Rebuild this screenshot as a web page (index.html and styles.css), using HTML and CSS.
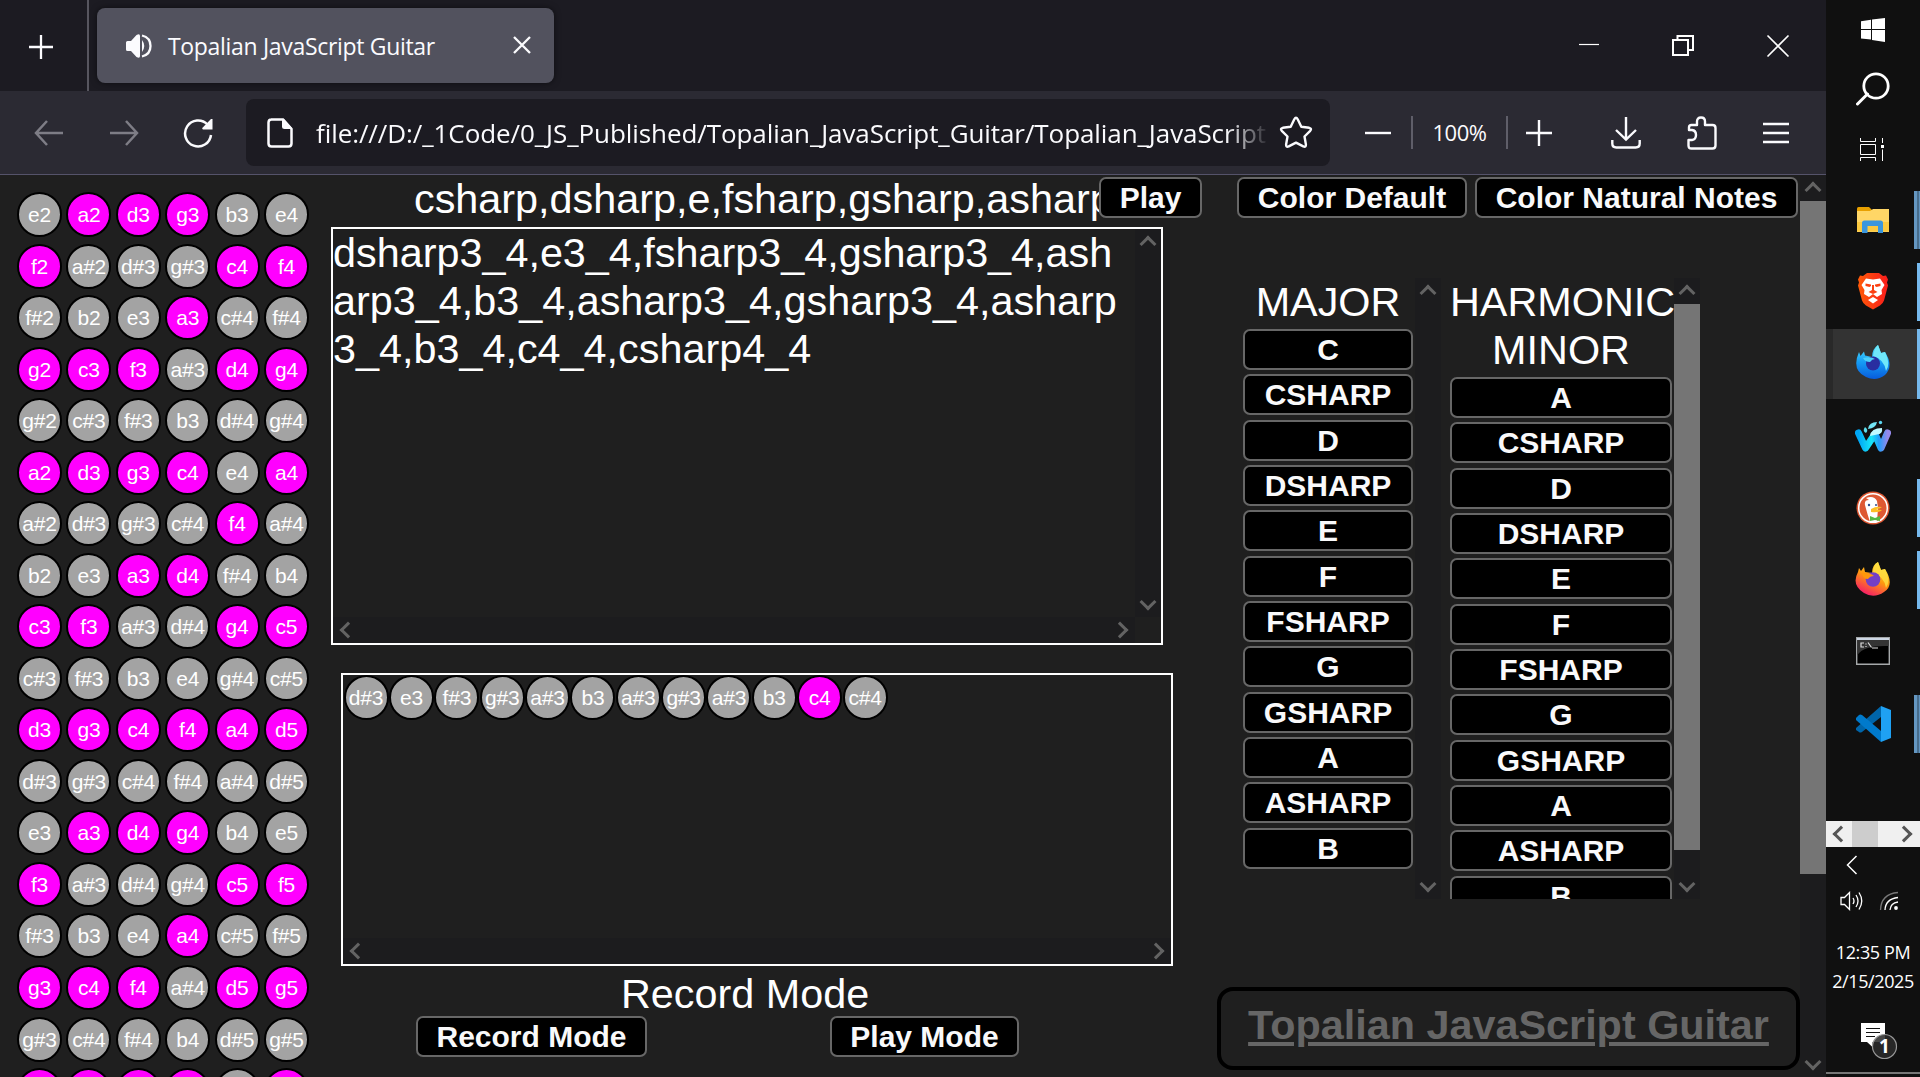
FILE: index.html
```html
<!DOCTYPE html>
<html lang="en">
<head>
<meta charset="utf-8">
<title>Topalian JavaScript Guitar</title>
<link rel="stylesheet" href="styles.css">
</head>
<body>
<div class="desktop">
  <div class="window">
    <header class="tabbar">
      <button class="newtab"><svg width="26" height="26" viewBox="0 0 26 26"><path d="M13 1v24M1 13h24" stroke="#fbfbfe" stroke-width="2.3"/></svg></button>
      <div class="tab">
        <svg width="26" height="24" viewBox="0 0 26 24"><path d="M0 8.500Q0 7 1.500 7H5L10.500 1Q14 -1 14 2V22Q14 25 10.500 23L5 17H1.500Q0 17 0 15.500Z" fill="#fbfbfe"/><path d="M16 6q4.500 6 0 12z" fill="#fbfbfe"/><path d="M16 1.500q8.500 2 8.500 10.500T16 22.500" fill="none" stroke="#fbfbfe" stroke-width="2.300"/></svg>
        <span class="tab-title">Topalian JavaScript Guitar</span>
        <svg class="tab-close" width="18" height="18" viewBox="0 0 18 18"><path d="M1 1l16 16M17 1L1 17" stroke="#fbfbfe" stroke-width="2.300"/></svg>
      </div>
      <div class="controls">
        <svg width="22" height="24" viewBox="0 0 22 24"><path d="M1 10.500h20" stroke="#fff" stroke-width="1.200"/></svg>
        <svg width="22" height="24" viewBox="0 0 22 24"><path d="M1 6h15v15H1zM5.500 6V2H21v14h-4.500" fill="none" stroke="#fff" stroke-width="2"/></svg>
        <svg width="24" height="24" viewBox="0 0 24 24"><path d="M1.500 1.500l21 21M22.500 1.500l-21 21" stroke="#fff" stroke-width="1.600"/></svg>
      </div>
    </header>
    <nav class="toolbar">
      <svg class="ic back" width="30" height="28" viewBox="0 0 30 28"><path d="M13 2L2 14l11 12M2 14h27" fill="none" stroke="#7e7d86" stroke-width="2.500"/></svg>
      <svg class="ic fwd" width="30" height="28" viewBox="0 0 30 28"><path d="M17 2l11 12-11 12M28 14H1" fill="none" stroke="#7e7d86" stroke-width="2.500"/></svg>
      <svg class="ic reload" width="30" height="30" viewBox="0 0 30 30"><path d="M24.500 6.500A13 13 0 1 0 28 17" fill="none" stroke="#fbfbfe" stroke-width="2.500"/><path d="M29.500 1v10.500H20q-1.500-.5-.5-1.800L28 1z" fill="#fbfbfe"/></svg>
      <div class="urlbar">
        <svg width="26" height="30" viewBox="0 0 26 30"><path d="M4 1.500h12L24.500 11v14.500q0 3-3 3h-17q-3 0-3-3v-21q0-3 3-3z" fill="none" stroke="#fbfbfe" stroke-width="2.500"/><path d="M15 1h2l8 9v1h-7.500q-2.500 0-2.500-2.500z" fill="#fbfbfe"/></svg>
        <span class="url">file:///D:/_1Code/0_JS_Published/Topalian_JavaScript_Guitar/Topalian_JavaScript</span>
        <svg class="star" width="34" height="33" viewBox="0 0 34 33"><path d="M15.300 3.300q1.700-3 3.400 0l3.600 7.400 7.900 1.100q3 .7 1 3l-5.700 5.700 1.400 8q.2 3-2.600 1.900L17 26.600l-7.300 3.800q-2.800 1.100-2.600-1.900l1.400-8-5.700-5.700q-2-2.300 1-3l7.900-1.100z" fill="none" stroke="#fbfbfe" stroke-width="2.400" stroke-linejoin="round"/></svg>
      </div>
      <svg class="ic zoomout" width="26" height="26" viewBox="0 0 26 26"><path d="M0 13h26" stroke="#fbfbfe" stroke-width="2.400"/></svg>
      <span class="zoom">100%</span>
      <svg class="ic zoomin" width="26" height="26" viewBox="0 0 26 26"><path d="M13 0v26M0 13h26" stroke="#fbfbfe" stroke-width="2.400"/></svg>
      <svg class="ic download" width="30" height="32" viewBox="0 0 30 32"><path d="M15 0v22M5 13l10 9.500L25 13M1.300 23v3.500q0 4 4 4h19.400q4 0 4-4V23" fill="none" stroke="#fbfbfe" stroke-width="2.400"/></svg>
      <svg class="ic puzzle" width="30" height="34" viewBox="0 0 30 34"><path d="M2 14V11.500Q2 9 4.500 9H10V5.500Q10 1.500 14 1.500T18 5.500V9h7.500Q28.500 9 28.500 12v17.500q0 3-3 3H4.500q-3 0-3-3V24H5q4-.5 4-5t-4-5z" fill="none" stroke="#fbfbfe" stroke-width="2.400" stroke-linejoin="round"/></svg>
      <svg class="ic" width="26" height="22" viewBox="0 0 26 22"><path d="M0 2h26M0 11h26M0 20h26" stroke="#fbfbfe" stroke-width="2.400"/></svg>
    </nav>
    <main class="page">
      <section class="fretboard" id="fretboard"></section>
      <section class="center">
        <div class="song-row">
          <span class="song">csharp,dsharp,e,fsharp,gsharp,asharp,</span>
          <button class="btn play">Play</button>
        </div>
        <div class="editor">
          <div class="editor-text">dsharp3_4,e3_4,fsharp3_4,gsharp3_4,ash<br>arp3_4,b3_4,asharp3_4,gsharp3_4,asharp<br>3_4,b3_4,c4_4,csharp4_4</div>
          <div class="vbar"><i class="arrow up"></i><i class="arrow down"></i></div>
          <div class="hbar"><i class="arrow left"></i><i class="arrow right"></i></div>
        </div>
        <div class="recording">
          <div class="recorded" id="recorded"></div>
          <div class="hbar"><i class="arrow left"></i><i class="arrow right"></i></div>
        </div>
        <div class="mode">Record Mode</div>
        <div class="mode-row"><button class="btn">Record Mode</button><button class="btn playmode">Play Mode</button></div>
      </section>
      <section class="side">
        <div class="color-row"><button class="btn cdef">Color Default</button><button class="btn cnat">Color Natural Notes</button></div>
        <div class="scales">
          <div class="scale major"><div class="list" id="major"><h2>MAJOR</h2></div><div class="vbar"><i class="arrow up"></i><i class="arrow down"></i></div></div>
          <div class="scale minor"><div class="list" id="minor"><h2>HARMONIC<br>MINOR</h2></div><div class="vbar"><i class="arrow up"></i><b class="thumb"></b><i class="arrow down"></i></div></div>
        </div>
        <div class="brand"><a>Topalian JavaScript Guitar</a></div>
      </section>
      <div class="vbar pagebar"><i class="arrow up"></i><b class="thumb"></b><i class="arrow down"></i></div>
    </main>
  </div>
  <aside class="taskbar">
    <div class="task t-start"><svg width="24" height="24" viewBox="0 0 24 24"><path d="M0 3.200L10 1.800V11H0zM11 1.600L24 0v11H11zM0 12h10v9.500L0 20.500zM11 12h13v12l-13-1.900z" fill="#fff"/></svg></div>
    <div class="task t-search"><svg width="34" height="34" viewBox="0 0 34 34"><circle cx="20" cy="14" r="12.200" fill="none" stroke="#fff" stroke-width="2.800"/><path d="M11.500 22L1.500 32" stroke="#fff" stroke-width="3" stroke-linecap="round"/></svg></div>
    <div class="task t-view"><svg width="26" height="24" viewBox="0 0 26 24"><path d="M.5 0v3.500h15V0M.5 6.500h15v10H.5zM.5 23v-3.500h15V23M22.500 0v5M22.500 11.500V23" fill="none" stroke="#fff"/><path d="M21 7h3v3h-3z" fill="#fff"/></svg></div>
    <div class="task t-files"><svg width="34" height="28" viewBox="0 0 34 28"><path d="M1 2.500Q1 1 2.500 1H13l3 3v4H1z" fill="#e8a000"/><path d="M1 5h13l3-2h16v23H1z" fill="#ffd666"/><path d="M1 16h32v9.500H1z" fill="#fbc940"/><path d="M6 27V17q0-2.500 2.500-2.500h16Q27 14.500 27 17v10h-5v-7H11.500v7z" fill="#3a96dd"/></svg><span class="run stacked"></span></div>
    <div class="task t-brave"><svg width="32" height="37" viewBox="0 0 32 37"><defs><linearGradient id="br"><stop offset="0" stop-color="#ff5a08"/><stop offset="1" stop-color="#f91c1c"/></linearGradient></defs><path d="M10 0h12l4 3 3-.5 2 4-1 3 1 3-4 15q-1 3-4 5l-7 4-7-4q-3-2-4-5L1 12.500l1-3-1-3 2-4 3 .5z" fill="url(#br)"/><path d="M9 5.500l7 1 7-1 4.500 6.500-3 5 .5 4-5 3L16 21l-4 3-5-3 .5-4-3-5z" fill="#fff"/><path d="M16 24l5 3-5 3.500-5-3.500z" fill="#fff"/><path d="M8.500 10.500l5.500 1v1.500l-1.500 1L8.500 13zM23.500 10.500l-5.500 1v1.500l1.500 1 4-1zM15 12h2v5l3.500 2-4.500 2-4.500-2 3.500-2z" fill="#fb4012"/></svg><span class="run"></span></div>
    <div class="task t-dev active"><svg width="36" height="36" viewBox="0 0 36 36"><defs><linearGradient id="fd" x2="0" y2="1"><stop offset="0" stop-color="#54e6ff"/><stop offset=".5" stop-color="#159cf5"/><stop offset="1" stop-color="#075bdc"/></linearGradient></defs><path d="M4 7l1.500 4L9 6.500l1 4 7 1.500q0-8 6-12l3 8 4-1q9 14 0 23-9 7-19 2Q-4 25 4 7z" fill="url(#fd)"/><path d="M18 11q1-7 5-11l3 8 4-1q6 12 1 19-2-12-13-15z" fill="#70e8fa"/><circle cx="18" cy="18.500" r="7" fill="#292da0"/><path d="M8 13q8-2 12 1-3 0-5 3-5 0-7-4z" fill="#4cd1fb"/></svg><span class="run"></span></div>
    <div class="task t-water"><svg width="36" height="33" viewBox="0 0 36 33"><defs><linearGradient id="wf"><stop offset="0" stop-color="#00a6f5"/><stop offset=".45" stop-color="#18e5f8"/><stop offset=".7" stop-color="#219ef9"/><stop offset="1" stop-color="#9589ea"/></linearGradient></defs><path d="M3.500 13l7 15L20 14l6 14L32.500 13" fill="none" stroke="url(#wf)" stroke-width="7" stroke-linecap="round" stroke-linejoin="round"/><path d="M15 16q1-8 12-8 1 6-5 6.500z" fill="#c1f9ff"/><path d="M13 9q1-7 9-7-1 6-9 7z" fill="#72e5f5"/><circle cx="25.500" cy="2.500" r="1.700" fill="#5bd5f1"/><path d="M10 7q4 3 1 6-4-2-1-6z" fill="#5cddec"/></svg></div>
    <div class="task t-duck"><svg width="34" height="34" viewBox="0 0 34 34"><circle cx="17" cy="17" r="16.500" fill="#de5833"/><circle cx="17" cy="17" r="14.300" fill="none" stroke="#fff" stroke-width="1.500"/><path d="M10 7q8-3 11 3l1 7-1 14h-7Q11 22 9 14q-1-5 4-5z" fill="#fff"/><path d="M15 18q5-3 11-2-2 2-6 2 2 1 6 1-3 3-11 2z" fill="#fdbf25"/><path d="M14 25l5 2 5-2v5l-5-1-5 1z" fill="#55b843"/><circle cx="13" cy="14" r="1.200" fill="#2d4f8e"/><circle cx="20" cy="14" r="1" fill="#2d4f8e"/></svg><span class="run"></span></div>
    <div class="task t-fox"><svg width="36" height="36" viewBox="0 0 36 36"><defs><linearGradient id="fx" x1=".8" x2=".3" y2="1"><stop offset="0" stop-color="#fff23f"/><stop offset=".5" stop-color="#ff980e"/><stop offset="1" stop-color="#f5156c"/></linearGradient></defs><path d="M4 7l2 3 3-4 1 5 7 1q0-8 6-11l3 8 4-1q10 16-1 23-10 7-20 1Q-4 24 3 11z" fill="url(#fx)"/><path d="M18 12q0-8 5-11l3 8 4-1q6 12 1 19-2-12-13-15z" fill="#ffde43" opacity=".8"/><circle cx="18" cy="18.500" r="7.300" fill="#733fc7"/><path d="M7 12q7-1 12 3-4 0-6 3-5 0-6-6z" fill="#ff970b"/></svg><span class="run"></span></div>
    <div class="task t-cmd"><svg width="34" height="28" viewBox="0 0 34 28"><path d="M.7.700h32.600v26.600H.7z" fill="#000" stroke="#a5a8aa" stroke-width="1.400"/><path d="M1.400 3h31.200v6Q8 8 1.400 18z" fill="#343434"/><path d="M1 1h32v2H1z" fill="#ccd6e4"/><path d="M8 6H5v4h3M10 6.500v1M10 9v1M12 5.500l3.500 5M16 11h6" fill="none" stroke="#ddd" stroke-width="1.200"/></svg></div>
    <div class="task t-code"><svg width="36" height="36" viewBox="0 0 36 36"><path d="M1 22L26 0v11L7 26q-2 1-3 0l-3-2z" fill="#0065a9"/><path d="M1 12l3-3q1-1 3 0l19 16v11L1 14z" fill="#007acc"/><path d="M26 0l10 4v28l-10 4z" fill="#1fa1f3"/></svg><span class="run stacked"></span></div>
    <div class="mini"><i class="arrow left"></i><b></b><i class="arrow right"></i></div>
    <svg class="chev" width="12" height="20" viewBox="0 0 12 20"><path d="M10.500 1L1.500 10l9 9" fill="none" stroke="#fff" stroke-width="1.500"/></svg>
    <div class="tray">
      <svg width="24" height="20" viewBox="0 0 24 20"><path d="M1 6.500h3.500l5-5v17l-5-5H1zM13 7q2 3 0 6M16 4q4 6 0 12M19 1.500q5.500 8.500 0 17" fill="none" stroke="#fff" stroke-width="1.300"/></svg>
      <svg width="20" height="20" viewBox="0 0 20 20"><path d="M1.500 19Q2 3 19 1.500" fill="none" stroke="#777" stroke-width="1.300"/><path d="M6 19Q6.500 8 19 6.500M11 19q.5-7 8-8" fill="none" stroke="#fff" stroke-width="1.300"/><circle cx="17" cy="17" r="1.900" fill="#fff"/></svg>
    </div>
    <div class="clock">12:35 PM<br>2/15/2025</div>
    <svg class="notice" width="38" height="38" viewBox="0 0 38 38"><path d="M1 1h24v19H12.500v5L7 20H1z" fill="#fff"/><path d="M6 6.500h14M6 10.500h14M6 14.500h9" stroke="#111" stroke-width="1.200"/><circle cx="24.500" cy="24.500" r="12" fill="#2b2b2bdd" stroke="#999" stroke-width="1.200"/><text x="24.500" y="31" text-anchor="middle" class="count">1</text></svg>
    <div class="edge"></div>
  </aside>
</div>
<script src="script.js"></script>
</body>
</html>
```
FILE: styles.css
```css
* { box-sizing: border-box; }
body { margin: 0; background: #1f1f1f; overflow: hidden; font-family: "Liberation Sans", Arial, sans-serif; }
svg { display: block; flex: none; }
.desktop { display: flex; width: 1920px; height: 1077px; overflow: hidden; }
.window { width: 1826px; display: flex; flex-direction: column; }

/* tab strip */
.tabbar { height: 91px; background: #1c1b22; display: flex; align-items: flex-start; }
.newtab { width: 89px; height: 91px; padding: 2px 0 0 28px; background: none; border: 0; border-right: 2px solid #57565f; }
.tab { width: 457px; height: 75px; margin: 8px 0 0 8px; padding-left: 29px; border-radius: 8px; background: #52525e; box-shadow: 0 0 6px #0008; display: flex; align-items: center; color: #fbfbfe; }
.tab-title { width: 345px; margin-left: 16px; padding-top: 1px; font: 23px/30px "Open Sans", sans-serif; letter-spacing: -0.32px; white-space: nowrap; }
.tab-close { margin-top: -1px; }
.controls { margin: 34px 0 0 auto; padding-right: 36px; display: flex; gap: 72px; }

/* navigation */
.toolbar { height: 84px; padding: 0 37px 0 34px; background: #2b2a33; border-bottom: 1px solid #55536a; display: flex; align-items: center; color: #fbfbfe; }
.fwd { margin-left: 45px; }
.reload { margin-left: 44px; }
.urlbar { width: 1084px; height: 67px; margin-left: 33px; padding: 0 17px 0 21px; border-radius: 8px; background: #1c1b22; display: flex; align-items: center; }
.url { width: 950px; margin-left: 23px; overflow: hidden; white-space: nowrap; font: 26px/36px "Open Sans", sans-serif; letter-spacing: -0.08px; -webkit-mask-image: linear-gradient(90deg, #000 910px, transparent 954px); mask-image: linear-gradient(90deg, #000 910px, transparent 954px); }
.star { margin-left: 13px; }
.zoomout { margin-left: 35px; }
.zoom { width: 99px; height: 33px; margin: 0 18px 0 20px; border: solid #5f5e69; border-width: 0 2px; text-align: center; font: 22px/32px "Open Sans", sans-serif; letter-spacing: -0.5px; }
.download { margin-left: 59px; }
.puzzle { margin: 0 46px; }

/* page */
.page { height: 902px; display: flex; background: #1f1f1f; color: #fff; overflow: hidden; }
.fretboard { width: 331px; padding: 17px 0 0 17px; display: grid; grid-template-columns: repeat(6, 49.4px); grid-auto-rows: 51.54px; align-content: start; flex: none; }
.note { width: 45px; height: 45px; border: 2px solid #000; border-radius: 50%; background: #a3a3a3; color: #fff; font-size: 21px; line-height: 41px; letter-spacing: -0.2px; display: flex; justify-content: center; white-space: nowrap; }
.note.natural { background: #f0f; }
.btn { height: 41px; padding: 0; border: 2px solid #676767; border-radius: 7px; background: #000; color: #f9f9fa; font: bold 30px/35px "Liberation Sans", Arial, sans-serif; text-align: center; }
.center { width: 886px; flex: none; }
.song-row { height: 52px; display: flex; }
.song { width: 685px; margin-left: 83px; font-size: 41.35px; line-height: 48px; white-space: nowrap; }
.play { width: 103px; margin-top: 2px; position: relative; }
.editor { width: 832px; height: 418px; border: 2px solid #fff; display: grid; grid-template: 388px 26px / 802px 26px; }
.editor-text { font-size: 41.35px; line-height: 48px; white-space: nowrap; }
.recording { width: 832px; height: 293px; margin: 28px 0 0 10px; border: 2px solid #fff; display: grid; grid-template-rows: 263px 26px; }
.recorded { display: flex; gap: .36px; padding: 0 0 0 .6px; }
.mode { margin: 4px 0 0 290px; font-size: 41.35px; line-height: 48px; height: 46px; }
.mode-row { display: flex; padding-left: 85px; gap: 183px; }
.mode-row .btn { width: 231px; }
.mode-row .playmode { width: 189px; }
.side { width: 583px; flex: none; }
.color-row { display: flex; gap: 8px; padding: 2px 0 0 20px; }
.cdef { width: 230px; }
.cnat { width: 323px; }
.scales { height: 621px; margin-top: 60px; padding-left: 26px; display: flex; gap: 9px; }
.scale { display: flex; overflow: hidden; }
.list { display: flex; flex-direction: column; gap: 4.34px; margin-right: 2px; }
.list h2 { margin: 0 0 -1.4px; text-align: center; font-size: 41.35px; line-height: 48px; font-weight: normal; white-space: nowrap; }
.list .btn { flex: none; }
.major .list { width: 170px; }
.minor .list { width: 222px; }
.brand { width: 583px; height: 83px; margin-top: 88px; border: 4px solid #000; border-radius: 16px; text-align: center; color: #666; font-size: 41.35px; line-height: 69px; font-weight: bold; white-space: nowrap; }
.brand a { text-decoration: underline; }

/* scrollbars */
.vbar { width: 26px; height: 100%; background: #1c1c1e; display: flex; flex-direction: column; justify-content: space-between; }
.hbar { height: 26px; background: #1c1c1e; display: flex; justify-content: space-between; grid-column: 1; }
.thumb { flex: none; background: #757575; margin-bottom: auto; }
.minor .thumb { height: 546px; }
.pagebar .thumb { height: 673px; }
.arrow { width: 26px; height: 26px; flex: none; display: grid; place-items: center; color: #636363; }
.arrow::before { content: ""; width: 9px; height: 9px; border: solid; border-width: 3px 0 0 3px; }
.up::before { transform: translateY(2px) rotate(45deg); }
.down::before { transform: translateY(-2px) rotate(225deg); }
.left::before { transform: translateX(2px) rotate(-45deg); }
.right::before { transform: translateX(-2px) rotate(135deg); }

/* taskbar */
.taskbar { width: 94px; background: #101010; color: #fff; display: flex; flex-direction: column; }
.task { position: relative; height: 72px; flex: none; display: grid; place-items: center; }
.t-start { height: 60px; }
.t-search { height: 59px; padding-bottom: 1px; }
.t-view { height: 60px; padding-top: 2px; }
.t-files { height: 82px; }
.t-brave { height: 68px; padding-bottom: 7px; }
.t-dev { height: 70px; padding-bottom: 2px; }
.t-water { height: 74px; }
.t-duck { height: 70px; }
.t-code { height: 73px; }
.active { background: #333; border-left: 7px solid #292929; padding-right: 7px; }
.run { position: absolute; right: 0; top: 6px; height: 58px; width: 3px; background: #76b9ed; }
.t-files .run { top: 12px; }
.t-brave .run { top: 2px; }
.t-fox .run, .t-code .run { top: 8px; }
.active .run { top: 0; height: 70px; }
.run.stacked { width: 6px; border-right: 1px solid #6093bf; background: linear-gradient(90deg, #6497c2 3px, #476c8b 3px); }
.mini { height: 26px; margin-top: 61px; background: #f0f0f0; display: flex; }
.mini b { width: 26px; background: #cdcdcd; margin-right: auto; }
.mini .arrow { color: #555; }
.mini .right { margin-right: 1px; }
.chev { margin: 8px 0 0 20px; }
.tray { display: flex; margin: 16px 0 0 14px; gap: 15px; }
.clock { margin-top: 27px; font: 18px/29px "Open Sans", sans-serif; text-align: center; white-space: nowrap; letter-spacing: -0.4px; }
.notice { margin: 26px 0 0 34px; }
.count { font: bold 19px "Open Sans", sans-serif; fill: #fff; }
.edge { margin-top: auto; height: 5px; border-top: 2px solid #777; }
```
FILE: script.js
```js
const NAMES = ["c", "c#", "d", "d#", "e", "f", "f#", "g", "g#", "a", "a#", "b"];
const MARKED = ["c", "d", "f", "g", "a"];
const OPEN_STRINGS = [28, 33, 38, 43, 47, 52];

function addNote(parent, pitch) {
  const name = NAMES[pitch % 12];
  const el = document.createElement("div");
  el.className = MARKED.includes(name) ? "note natural" : "note";
  el.textContent = name + Math.floor(pitch / 12);
  parent.append(el);
}

const board = document.getElementById("fretboard");
for (let fret = 0; fret < 18; fret++) {
  OPEN_STRINGS.forEach(open => addNote(board, open + fret));
}

const recorded = document.getElementById("recorded");
[39, 40, 42, 44, 46, 47, 46, 44, 46, 47, 48, 49].forEach(p => addNote(recorded, p));

function addKeys(id, keys) {
  keys.split(" ").forEach(key => {
    const button = document.createElement("button");
    button.className = "btn";
    button.textContent = key;
    document.getElementById(id).append(button);
  });
}
addKeys("major", "C CSHARP D DSHARP E F FSHARP G GSHARP A ASHARP B");
addKeys("minor", "A CSHARP D DSHARP E F FSHARP G GSHARP A ASHARP B");
```
